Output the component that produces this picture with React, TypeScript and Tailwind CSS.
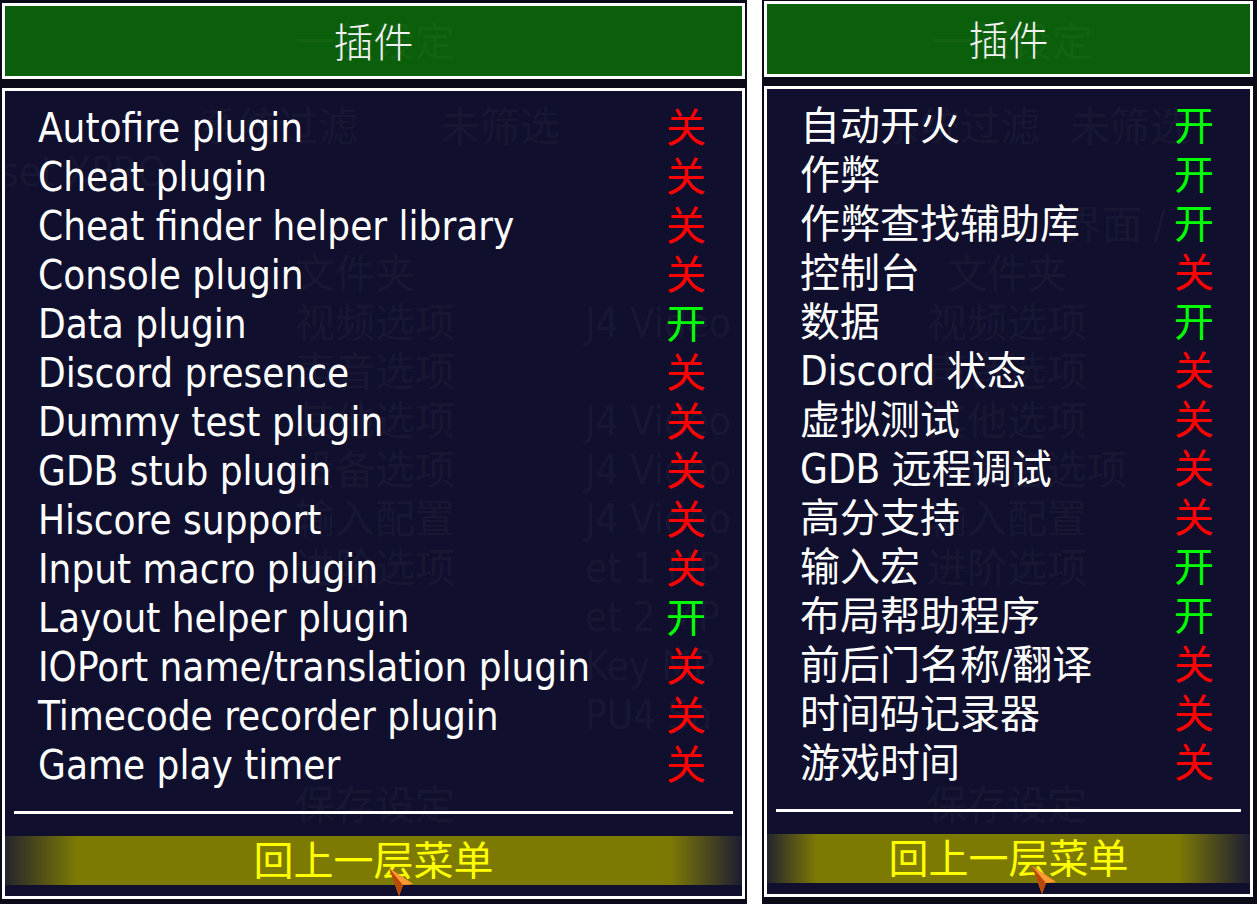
import React from 'react';

type Item = { label: string; on: boolean };
type Ghost = { text: string; x: number; y: number };

const LEFT: Item[] = [
  { label: 'Autofire plugin', on: false },
  { label: 'Cheat plugin', on: false },
  { label: 'Cheat finder helper library', on: false },
  { label: 'Console plugin', on: false },
  { label: 'Data plugin', on: true },
  { label: 'Discord presence', on: false },
  { label: 'Dummy test plugin', on: false },
  { label: 'GDB stub plugin', on: false },
  { label: 'Hiscore support', on: false },
  { label: 'Input macro plugin', on: false },
  { label: 'Layout helper plugin', on: true },
  { label: 'IOPort name/translation plugin', on: false },
  { label: 'Timecode recorder plugin', on: false },
  { label: 'Game play timer', on: false },
];

const RIGHT: Item[] = [
  { label: '自动开火', on: true },
  { label: '作弊', on: true },
  { label: '作弊查找辅助库', on: true },
  { label: '控制台', on: false },
  { label: '数据', on: true },
  { label: 'Discord 状态', on: false },
  { label: '虚拟测试', on: false },
  { label: 'GDB 远程调试', on: false },
  { label: '高分支持', on: false },
  { label: '输入宏', on: true },
  { label: '布局帮助程序', on: true },
  { label: '前后门名称/翻译', on: false },
  { label: '时间码记录器', on: false },
  { label: '游戏时间', on: false },
];

// faint menu showing through the translucent panels
const LEFT_GHOST: Ghost[] = [
  { text: '一般设定', x: 295, y: 22 },
  { text: '系统过滤', x: 198, y: 107 },
  { text: '未筛选', x: 440, y: 107 },
  { text: 'set XPRO', x: 0, y: 152 },
  { text: '文件夹', x: 295, y: 254 },
  { text: '视频选项', x: 295, y: 303 },
  { text: 'J4 Video', x: 585, y: 303 },
  { text: '声音选项', x: 295, y: 352 },
  { text: '其他选项', x: 295, y: 401 },
  { text: 'J4 Video', x: 585, y: 401 },
  { text: '设备选项', x: 295, y: 450 },
  { text: 'J4 Video', x: 585, y: 450 },
  { text: '输入配置', x: 295, y: 499 },
  { text: 'J4 Video', x: 585, y: 499 },
  { text: '进阶选项', x: 295, y: 548 },
  { text: 'et 1 MP', x: 585, y: 548 },
  { text: 'et 2 MP', x: 585, y: 597 },
  { text: 'Key MP', x: 585, y: 646 },
  { text: 'PU4 Sa', x: 585, y: 695 },
  { text: '保存设定', x: 295, y: 785 },
];

const RIGHT_GHOST: Ghost[] = [
  { text: '一般设定', x: 170, y: 22 },
  { text: '系统过滤', x: 118, y: 107 },
  { text: '未筛选', x: 308, y: 107 },
  { text: '界面 /', x: 300, y: 205 },
  { text: '文件夹', x: 185, y: 254 },
  { text: '视频选项', x: 165, y: 303 },
  { text: '声音选项', x: 165, y: 352 },
  { text: '其他选项', x: 165, y: 401 },
  { text: '设备选项', x: 205, y: 450 },
  { text: '输入配置', x: 165, y: 499 },
  { text: '进阶选项', x: 165, y: 548 },
  { text: '保存设定', x: 165, y: 785 },
];

const FONT =
  "font-['DejaVu_Sans_Condensed','DejaVu_Sans','Noto_Sans_CJK_SC',sans-serif]";

function Pointer() {
  return (
    <svg width="28" height="30" viewBox="0 0 28 30" className="absolute">
      <path d="M1 1 L25 17 L15 18 L11 29 Z" fill="#f07a12" />
      <path d="M1 1 L15 18 L11 29 Z" fill="#b54a06" />
      <path d="M1 1 L25 17 L15 18 Z" fill="#ff9a30" />
    </svg>
  );
}

function GhostLayer({ ghosts }: { ghosts: Ghost[] }) {
  return (
    <div className="pointer-events-none absolute inset-0 z-20 overflow-hidden text-white/[0.045]">
      {ghosts.map((g, i) => (
        <span
          key={i}
          className="absolute whitespace-nowrap"
          style={{ left: g.x, top: g.y }}
        >
          {g.text}
        </span>
      ))}
    </div>
  );
}

function Panel({
  items,
  width,
  top,
  fade,
  pointerLeft,
}: {
  items: Item[];
  width: number;
  top: number;
  fade: string;
  pointerLeft: string;
}) {
  return (
    <div className="flex flex-col px-[2px]" style={{ width, paddingTop: top }}>
      {/* title */}
      <div className="flex h-[76px] items-center justify-center border-[3px] border-white bg-[#0b5f0b] pt-[4px] text-[40px] font-light text-[#f2f2f2]">
        插件
      </div>

      {/* list */}
      <div className="mt-[9px] flex h-[811px] flex-col border-[3px] border-white bg-[#10102e]">
        <div className="flex flex-col pt-[12px] pl-[33px] pr-[36px]">
          {items.map((it) => (
            <div key={it.label} className="flex h-[49px] items-center justify-between">
              <span className="whitespace-nowrap text-white">{it.label}</span>
              <span className={it.on ? 'text-[#00ff00]' : 'text-[#ff0000]'}>
                {it.on ? '开' : '关'}
              </span>
            </div>
          ))}
        </div>
        <div className="mx-[9px] mt-[22px] h-[3px] bg-white" />
        <div className={`relative mt-[22px] flex h-[49px] items-center justify-center text-[#ffff00] ${fade}`}>
          回上一层菜单
          <div className={`absolute top-[31px] z-30 ${pointerLeft}`}>
            <Pointer />
          </div>
        </div>
      </div>
    </div>
  );
}

export default function App() {
  return (
    <div className={`flex h-[904px] w-[1260px] overflow-hidden bg-white text-[40px] leading-none ${FONT}`}>
      <div className="relative h-full w-[747px] bg-[#0b0a19]">
        <Panel
          items={LEFT}
          width={747}
          top={3}
          fade="bg-[linear-gradient(to_right,#24242c,#7d7a04_72px,#7d7a04_calc(100%_-_72px),#1c1c34)]"
          pointerLeft="left-[383px]"
        />
        <GhostLayer ghosts={LEFT_GHOST} />
      </div>
      <div className="w-[15px]" />
      <div className="relative h-full w-[495px] bg-[#0b0a19]">
        <Panel
          items={RIGHT}
          width={493}
          top={1}
          fade="bg-[linear-gradient(to_right,#24242c,#7d7a04_50px,#7d7a04_calc(100%_-_72px),#1c1c34)]"
          pointerLeft="left-[264px]"
        />
        <GhostLayer ghosts={RIGHT_GHOST} />
      </div>
    </div>
  );
}
